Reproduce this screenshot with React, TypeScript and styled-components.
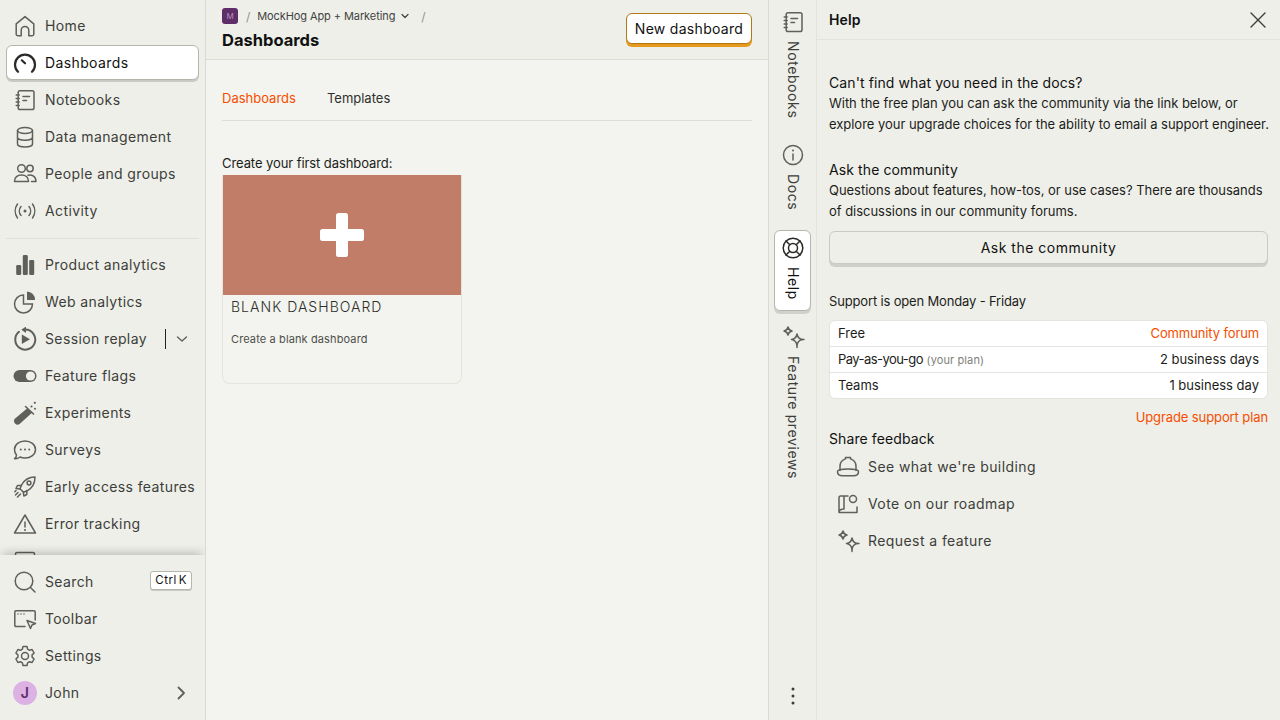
import React from 'react';
import styled, { createGlobalStyle } from 'styled-components';

const Global = createGlobalStyle`
  html, body { margin: 0; padding: 0; height: 100%; }
  body { font-family: Inter, "Liberation Sans", sans-serif; background: #eeefe9; color: #111; overflow: hidden; }
  #root { height: 720px; }
  * { box-sizing: border-box; }
`;

const Page = styled.div`display: flex; width: 1280px; height: 720px; overflow: hidden;`;
const Nav = styled.nav`width: 206px; flex: none; height: 720px; border-right: 1px solid #d9dad3; display: flex; flex-direction: column; background: #eeefe9; overflow: hidden;`;
const NavScroll = styled.div`height: 555px; flex: none; overflow: hidden; padding: 8px 6px 0 6px; display: flex; flex-direction: column; gap: 2px;`;
const NavBottom = styled.div`flex: 1; position: relative; z-index: 1; padding: 9px 6px 0 6px; display: flex; flex-direction: column; gap: 2px; background: #eeefe9; box-shadow: 0 -5px 9px -3px rgba(0,0,0,.22);`;
const NavItem = styled.div<{ $active?: boolean }>`
  height: 35px; flex: none; display: flex; align-items: center; gap: 8px; padding: 0 6px 0 6px; border-radius: 6px;
  font-size: 14px; font-weight: 400; letter-spacing: 0.38px; white-space: nowrap;
  color: ${p => (p.$active ? '#111' : '#3d3e3a')};
  background: ${p => (p.$active ? '#fff' : 'transparent')};
  border: 1px solid ${p => (p.$active ? '#b5b6ae' : 'transparent')};
  box-shadow: ${p => (p.$active ? '0 2px 0 #c9cac3' : 'none')};
`;
const IconBox = styled.span<{ $dark?: boolean }>`width: 24px; height: 24px; flex: none; display: flex; align-items: center; justify-content: center; color: ${p => (p.$dark ? '#2a2b28' : '#5f605b')};`;
const Trailing = styled.span`margin-left: auto; display: flex; align-items: center; flex: none;`;
const Divider = styled.div`height: 1px; background: #dfe0d9; margin: 8px 0 6px; flex: none;`;
const Split = styled.span`width: 1px; height: 20px; background: #222; margin: 0 9px 0 0;`;
const ChevronDown = styled.svg`flex: none; margin-right: 3px;`;
const ChevronRight = styled.svg`flex: none; margin-right: 3px;`;
const Kbd = styled.span`font-size: 11.5px; line-height: 17px; height: 19px; padding: 0 4px; background: #fff; color: #111; border: 1px solid #b5b6ae; border-radius: 3px; letter-spacing: .55px; word-spacing: -2px; box-shadow: 0 1px 0 #c9cac3; margin-top: -2px;`;
const Avatar = styled.span`width: 24px; height: 24px; border-radius: 50%; background: #dcb1e3; color: #5d2a68; font-size: 14px; font-weight: 600; display: flex; align-items: center; justify-content: center;`;

const Main = styled.main`width: 562px; flex: none; height: 720px; background: #f3f4ef; display: flex; flex-direction: column;`;
const TopBar = styled.header`height: 60px; flex: none; background: #eeefe9; border-bottom: 1px solid #dcddd6; padding: 8px 16px 0 16px; display: flex; justify-content: space-between;`;
const TitleCol = styled.div`display: flex; flex-direction: column;`;
const Crumbs = styled.div`display: flex; align-items: center; height: 16px; font-size: 11px; letter-spacing: -.09px; color: #42433f;`;
const Logo = styled.span`width: 16px; height: 16px; border-radius: 3px; background: #5f2e68; color: #b98fc0; font-size: 8px; display: flex; align-items: center; justify-content: center; margin-right: 8px;`;
const Slash = styled.span`color: #92938c; font-size: 12px; margin-right: 7px;`;
const Chevron = styled.svg`margin: 0 11px 0 5px;`;
const Title = styled.h1`margin: 6px 0 0; font-size: 16.5px; line-height: 20px; font-weight: 700; color: #111;`;
const PrimaryBtn = styled.button`
  margin-top: 5px; width: 126px; height: 31px; background: #fff; border: 1px solid #b17816; border-radius: 6px; font: 400 14px Inter, sans-serif; letter-spacing: .3px; color: #111; padding: 0;
  box-shadow: 0 3px 0 #e59a1d;
`;
const Content = styled.div`padding: 0 16px; flex: 1;`;
const Tabs = styled.div`margin-top: 21px; height: 40px; display: flex; gap: 31px; border-bottom: 1px solid #dcddd6; font-size: 13px; align-items: flex-start; padding-top: 8px; line-height: 18px;`;
const Tab = styled.span<{ $on?: boolean }>`color: ${p => (p.$on ? '#f54e00' : '#2f302c')};`;
const CreateLabel = styled.div`margin-top: 33px; padding-bottom: 1px; font-size: 13px; letter-spacing: -.08px; line-height: 18px; height: 21px; color: #1c1d1a;`;
const Card = styled.div`width: 240px; height: 209px; border: 1px solid #e3e4de; border-top: 0; border-radius: 0 0 8px 8px; background: #f3f4ef;`;
const CardImg = styled.div`height: 120px; background: #c17d67; display: flex; align-items: center; justify-content: center;`;
const CardTitle = styled.div`margin: 3px 8px 0; font-size: 14px; line-height: 18px; letter-spacing: 1.03px; font-weight: 300; color: #2e2f2b; text-transform: uppercase;`;
const CardDesc = styled.div`margin: 15px 8px 0; font-size: 11px; line-height: 16px; letter-spacing: .12px; color: #4e4f4a;`;

const Rail = styled.aside`width: 49px; flex: none; height: 720px; border-left: 1px solid #d9dad3; border-right: 1px solid #e2e3dc; display: flex; flex-direction: column; align-items: center; padding: 4px 0 0; gap: 8px; position: relative;`;
const RailBtn = styled.div<{ $active?: boolean }>`
  width: 37px; display: flex; flex-direction: column; align-items: center; gap: 7px; border-radius: 6px; padding: 5px 0 10px;
  font-size: 14px; letter-spacing: .6px; font-weight: 400; color: ${p => (p.$active ? '#111' : '#3d3e3a')};
  background: ${p => (p.$active ? '#fff' : 'transparent')};
  border: 1px solid ${p => (p.$active ? '#b5b6ae' : 'transparent')};
  box-shadow: ${p => (p.$active ? '0 3px 0 #d0d1ca' : 'none')};
`;
const VText = styled.span`writing-mode: vertical-rl; white-space: nowrap; line-height: 20px;`;
const RailMore = styled.div`position: absolute; bottom: 14px; left: 0; right: 0; display: flex; justify-content: center; color: #3d3e3a;`;

const Help = styled.section`width: 463px; flex: none; height: 720px; display: flex; flex-direction: column; background: #eeefe9;`;
const HelpHead = styled.div`height: 40px; flex: none; border-bottom: 1px solid #e2e3dc; padding: 0 14px 0 12px; display: flex; align-items: center; justify-content: space-between; font-size: 14px; font-weight: 600; letter-spacing: .15px; color: #111;`;
const HelpBody = styled.div`padding: 33px 12px 0; display: flex; flex-direction: column; width: 463px;`;
const H = styled.div<{ $top?: number }>`font-size: 14px; line-height: 20px; letter-spacing: .1px; color: #111; margin-top: ${p => p.$top ?? 0}px;`;
const P = styled.div`font-size: 13px; line-height: 21px; color: #1c1d1a; letter-spacing: -.03px; white-space: nowrap;`;
const WideBtn = styled.div`margin-top: 9px; height: 33px; border: 1px solid #c9cac3; border-radius: 6px; background: #eeefe9; box-shadow: 0 3px 0 #cfd0c9; display: flex; align-items: center; justify-content: center; font-size: 14px; font-weight: 400; letter-spacing: .5px; color: #111;`;
const Support = styled.div`margin-top: 28px; font-size: 13px; letter-spacing: -.16px; line-height: 18px; color: #1c1d1a;`;
const Table = styled.div`margin-top: 10px; background: #fff; border: 1px solid #e3e4de; border-radius: 6px; overflow: hidden;`;
const Row = styled.div`height: 26px; padding: 0 8px 2px; display: flex; align-items: center; justify-content: space-between; font-size: 13px; color: #1c1d1a; border-top: 1px solid #e3e4de; &:first-child { border-top: 0; height: 25px; }`;
const Tight = styled.span`letter-spacing: -.55px;`;
const Muted = styled.span`font-size: 11px; color: #7e7f79; letter-spacing: .1px;`;
const Orange = styled.span`color: #f54e00; letter-spacing: -.12px;`;
const Upgrade = styled.div`margin-top: 9px; text-align: right; font-size: 13px; letter-spacing: -.1px; line-height: 18px; color: #f54e00;`;
const Feedback = styled.div`margin-top: 3px;`;
const FeedRow = styled.div`height: 37px; display: flex; align-items: center; gap: 8px; padding-left: 7px; font-size: 14px; font-weight: 400; letter-spacing: .42px; color: #3d3e3a;`;
const FeedList = styled.div`margin-top: -1px; display: flex; flex-direction: column;`;

const S: React.FC<{ children: React.ReactNode }> = ({ children }) => (
  <svg width={24} height={24} viewBox="0 0 24 24" fill="none" stroke="currentColor" strokeWidth={1.5} strokeLinecap="round" strokeLinejoin="round">{children}</svg>
);

const Ico = {
  home: <S><path d="M3.200 9.800 12 2.600l8.800 7.200V20a1.800 1.800 0 0 1-1.800 1.800h-3.200v-5.600a3.800 3.800 0 0 0-7.600 0v5.600H5A1.800 1.800 0 0 1 3.200 20z" /></S>,
  gauge: <S><path d="M5 20.800A10 10 0 1 1 19 20.800" strokeWidth={2.2} /><path d="M8.800 9.300 12 12.300" strokeWidth={2.200} /></S>,
  notebook: <S><rect x="5.200" y="2.800" width="15.800" height="18.800" rx="1.800" /><path d="M3.200 7h3M3.200 10.500h3M3.200 14h3M3.200 17.500h3M10 8.500h6.500M10 12.500h3.500" /></S>,
  data: <S><ellipse cx="12" cy="5.500" rx="7.500" ry="3" /><path d="M4.500 5.500V19c0 1.700 3.400 3 7.500 3s7.500-1.300 7.500-3V5.500M4.500 12.200c0 1.700 3.400 3 7.500 3s7.500-1.300 7.500-3" /></S>,
  people: <S><circle cx="8.500" cy="6.500" r="3.800" /><circle cx="17" cy="6.500" r="3.200" /><path d="M1.500 19.500c0-4.200 3-6.500 7-6.500s7 2.300 7 6.500zM15 13.200c4-.8 8 1 8 6.300h-4.500" /></S>,
  activity: <S><circle cx="12" cy="12" r="1.500" fill="currentColor" stroke="none" /><path d="M8 7.500a7 7 0 0 0 0 9M16 7.500a7 7 0 0 1 0 9M4.500 5a12 12 0 0 0 0 14M19.500 5a12 12 0 0 1 0 14" /></S>,
  bars: <svg width="24" height="24" viewBox="0 0 24 24" fill="currentColor"><rect x="3.200" y="12" width="5" height="10" rx="1.300" /><rect x="9.800" y="2" width="5" height="20" rx="1.300" /><rect x="16.200" y="7" width="5" height="15" rx="1.300" /></svg>,
  pie: <svg width="24" height="24" viewBox="0 0 24 24" fill="none" stroke="currentColor" strokeWidth="1.500"><path d="M10.500 5a9 9 0 1 0 9 9h-9z" /><path d="M14 1.500a8 8 0 0 1 8 8.500h-8z" fill="currentColor" stroke="none" /></svg>,
  replay: <svg width="24" height="24" viewBox="0 0 24 24" fill="none" stroke="currentColor" strokeWidth="2" strokeLinecap="round"><path d="M6 4.800a10 10 0 1 0 6.500-2.200" /><path d="M13 -.5v6.500L8.300 2.800z" fill="currentColor" stroke="none" /><path d="M8.800 7.500v9.500l8.200-4.700z" fill="currentColor" stroke="none" /></svg>,
  flag: <svg width="24" height="24" viewBox="0 0 24 24"><rect x="0.500" y="6" width="23" height="12" rx="6" fill="currentColor" /><circle cx="17.500" cy="12" r="4.600" fill="#eeefe9" /></svg>,
  flask: <svg width="24" height="24" viewBox="0 0 24 24" fill="none"><path d="M14 7.500 1.800 17.800a3.600 3.600 0 0 0 4.800 5.200L19 11.800z" fill="currentColor" /><path d="M12.500 5.500l8 7.500" stroke="currentColor" strokeWidth="1.600" strokeLinecap="round" /><circle cx="18.500" cy="5.500" r="1.100" fill="currentColor" /><circle cx="21.800" cy="1.800" r="1.100" fill="currentColor" /><circle cx="22" cy="7.800" r="1" fill="currentColor" /></svg>,
  chat: <S><path d="M12 3c5.800 0 10.500 3.600 10.500 8.500S17.800 20 12 20c-1.800 0-3.500-.3-5-1-1.200 1-3 2-5.500 1.700 1.300-.9 2-2.200 2-3.800C2.300 15.500 1.500 13.600 1.500 11.500 1.500 6.600 6.200 3 12 3z" /><path d="M7.800 11.500h.01M12 11.500h.01M16.200 11.500h.01" strokeWidth={2} /></S>,
  rocket: <S><path d="M22 2c-6 0-10.500 2.500-13.500 8L7 13.800l3.500 3.500 3.700-1.500c5.500-3 7.800-7.800 7.800-13.800z" /><circle cx="16" cy="8" r="1.900" /><path d="M8.500 10.500H4.500L3 13.500l4 .5M13.800 15.500v4l-3 1.500-.5-4M5 17.500 2.500 20M7.500 19l-3 3M3 15.500l-1.200 1.200" /></S>,
  warn: <S><path d="M12 3 22.500 21h-21z" /><path d="M12 10v5" /><path d="M12 18h.01" strokeWidth={2} /></S>,
  sql: <S><rect x="2.500" y="3.500" width="19" height="17" rx="1.500" /><path d="M2.500 8h19" /></S>,
  search: <S><circle cx="11" cy="11" r="8.800" /><path d="M17.500 17.500 22 22" /></S>,
  toolbar: <S><path d="M12 19.500H3a1.200 1.200 0 0 1-1.200-1.200V5a1.200 1.200 0 0 1 1.200-1.200h18A1.200 1.200 0 0 1 22.200 5v8" /><path d="M5 7h.01M8 7h.01M11 7h.01" /><path d="M14 13.500 22.500 16.500 19 18l-1.500 3.500z" /></S>,
  gear: <S><circle cx="12" cy="12" r="3.500" /><path d="M10 2.500h4l.6 2.700 1.900 1.100 2.600-.8 2 3.500-2 1.900v2.200l2 1.900-2 3.500-2.600-.8-1.900 1.100-.6 2.700h-4l-.6-2.700-1.900-1.100-2.600.8-2-3.500 2-1.900V10.900l-2-1.900 2-3.500 2.600.8 1.900-1.100z" /></S>,
  info: <S><circle cx="12" cy="12" r="9.500" /><path d="M12 11v6" /><path d="M12 7.500h.01" strokeWidth={2} /></S>,
  help: <S><circle cx="12" cy="12" r="9.800" /><circle cx="12" cy="12" r="4.500" /><path d="M5 5l3.800 3.800M19 5l-3.800 3.800M5 19l3.800-3.800M19 19l-3.800-3.800" /></S>,
  spark: <S><path d="M7 2c.5 2.500 1.500 3.500 4 4-2.500.5-3.500 1.500-4 4-.5-2.500-1.500-3.500-4-4 2.500-.5 3.500-1.500 4-4z" /><path d="M16 9c.7 3.500 2 5 5.500 5.500-3.500.5-4.800 2-5.500 5.500-.7-3.500-2-5-5.500-5.500 3.500-.5 4.800-2 5.500-5.500z" /><path d="M16 20v2.500M21.500 14.500H23" /></S>,
  hat: <S><path d="M4 15.500V11.500a8 8 0 0 1 5.500-7.600V2.500h5v1.400A8 8 0 0 1 20 11.500v4" /><path d="M1.500 16.500c0-1.500 3.500-2.500 10.500-2.500s10.500 1 10.500 2.500c0 2.500-2 4.300-5 4.300H6.500c-3 0-5-1.800-5-4.300z" /></S>,
  road: <S><path d="M8 4v13M3 20V5.500A1.500 1.500 0 0 1 4.500 4H12M3 20.500h18V15M3 20.500c0-2 1.500-3.500 5-3.500" /><circle cx="17" cy="7" r="3.500" /></S>,
};

type It = { l: string; i: React.ReactNode; active?: boolean; extra?: React.ReactNode };
const top: It[] = [
  { l: 'Home', i: Ico.home },
  { l: 'Dashboards', i: Ico.gauge, active: true },
  { l: 'Notebooks', i: Ico.notebook },
  { l: 'Data management', i: Ico.data },
  { l: 'People and groups', i: Ico.people },
  { l: 'Activity', i: Ico.activity },
];
const mid: It[] = [
  { l: 'Product analytics', i: Ico.bars },
  { l: 'Web analytics', i: Ico.pie },
  { l: 'Session replay', i: Ico.replay, extra: (
    <Trailing><Split /><ChevronDown width="14" height="14" viewBox="0 0 14 14" fill="none" stroke="#5f605b" strokeWidth="1.400" strokeLinecap="round" strokeLinejoin="round"><path d="M2.500 5 7 9l4.500-4" /></ChevronDown></Trailing>
  ) },
  { l: 'Feature flags', i: Ico.flag },
  { l: 'Experiments', i: Ico.flask },
  { l: 'Surveys', i: Ico.chat },
  { l: 'Early access features', i: Ico.rocket },
  { l: 'Error tracking', i: Ico.warn },
  { l: 'SQL editor', i: Ico.sql },
];

const Item: React.FC<It> = ({ l, i, active, extra }) => (
  <NavItem $active={active}><IconBox $dark={active}>{i}</IconBox>{l}{extra}</NavItem>
);

export default function App() {
  return (
    <Page>
      <Global />
      <Nav>
        <NavScroll>
          {top.map(t => <Item key={t.l} {...t} />)}
          <Divider />
          {mid.map(t => <Item key={t.l} {...t} />)}
        </NavScroll>
        <NavBottom>
          <NavItem><IconBox>{Ico.search}</IconBox>Search<Trailing><Kbd>Ctrl K</Kbd></Trailing></NavItem>
          <Item l="Toolbar" i={Ico.toolbar} />
          <Item l="Settings" i={Ico.gear} />
          <NavItem><IconBox><Avatar>J</Avatar></IconBox>John
            <Trailing><ChevronRight width="16" height="16" viewBox="0 0 16 16" fill="none" stroke="#5f605b" strokeWidth="1.800" strokeLinecap="round" strokeLinejoin="round"><path d="M5.500 2.500 11 8l-5.500 5.500" /></ChevronRight></Trailing>
          </NavItem>
        </NavBottom>
      </Nav>

      <Main>
        <TopBar>
          <TitleCol>
            <Crumbs>
              <Logo>M</Logo><Slash>/</Slash>MockHog App + Marketing
              <Chevron width="10" height="10" viewBox="0 0 10 10" fill="none" stroke="#42433f" strokeWidth="1.200" strokeLinecap="round" strokeLinejoin="round"><path d="M2 3.500 5 6.500l3-3" /></Chevron>
              <Slash>/</Slash>
            </Crumbs>
            <Title>Dashboards</Title>
          </TitleCol>
          <PrimaryBtn>New dashboard</PrimaryBtn>
        </TopBar>
        <Content>
          <Tabs><Tab $on>Dashboards</Tab><Tab>Templates</Tab></Tabs>
          <CreateLabel>Create your first dashboard:</CreateLabel>
          <Card>
            <CardImg>
              <svg width="44" height="44" viewBox="0 0 44 44" fill="#fff"><rect x="16" y="0" width="12" height="44" rx="2.500" /><rect x="0" y="16" width="44" height="12" rx="2.500" /></svg>
            </CardImg>
            <CardTitle>Blank dashboard</CardTitle>
            <CardDesc>Create a blank dashboard</CardDesc>
          </Card>
        </Content>
      </Main>

      <Rail>
        <RailBtn><IconBox>{Ico.notebook}</IconBox><VText>Notebooks</VText></RailBtn>
        <RailBtn><IconBox>{Ico.info}</IconBox><VText>Docs</VText></RailBtn>
        <RailBtn $active><IconBox $dark>{Ico.help}</IconBox><VText>Help</VText></RailBtn>
        <RailBtn><IconBox>{Ico.spark}</IconBox><VText>Feature previews</VText></RailBtn>
        <RailMore><svg width="4" height="20" viewBox="0 0 4 20" fill="currentColor"><circle cx="2" cy="3" r="1.500" /><circle cx="2" cy="10" r="1.500" /><circle cx="2" cy="17" r="1.500" /></svg></RailMore>
      </Rail>

      <Help>
        <HelpHead>Help
          <svg width="16" height="16" viewBox="0 0 16 16" fill="none" stroke="#3d3e3a" strokeWidth="1.400" strokeLinecap="round"><path d="M1 1l14 14M15 1 1 15" /></svg>
        </HelpHead>
        <HelpBody>
          <H>Can't find what you need in the docs?</H>
          <P>With the free plan you can ask the community via the link below, or<br />explore your upgrade choices for the ability to email a support engineer.</P>
          <H $top={25}>Ask the community</H>
          <P>Questions about features, how-tos, or use cases? There are thousands<br />of discussions in our community forums.</P>
          <WideBtn>Ask the community</WideBtn>
          <Support>Support is open Monday - Friday</Support>
          <Table>
            <Row><span>Free</span><Orange>Community forum</Orange></Row>
            <Row><span><Tight>Pay-as-you-go</Tight> <Muted>(your plan)</Muted></span><span>2 business days</span></Row>
            <Row><span>Teams</span><span>1 business day</span></Row>
          </Table>
          <Upgrade>Upgrade support plan</Upgrade>
          <Feedback>
            <H>Share feedback</H>
            <FeedList>
              <FeedRow><IconBox>{Ico.hat}</IconBox>See what we're building</FeedRow>
              <FeedRow><IconBox>{Ico.road}</IconBox>Vote on our roadmap</FeedRow>
              <FeedRow><IconBox>{Ico.spark}</IconBox>Request a feature</FeedRow>
            </FeedList>
          </Feedback>
        </HelpBody>
      </Help>
    </Page>
  );
}
